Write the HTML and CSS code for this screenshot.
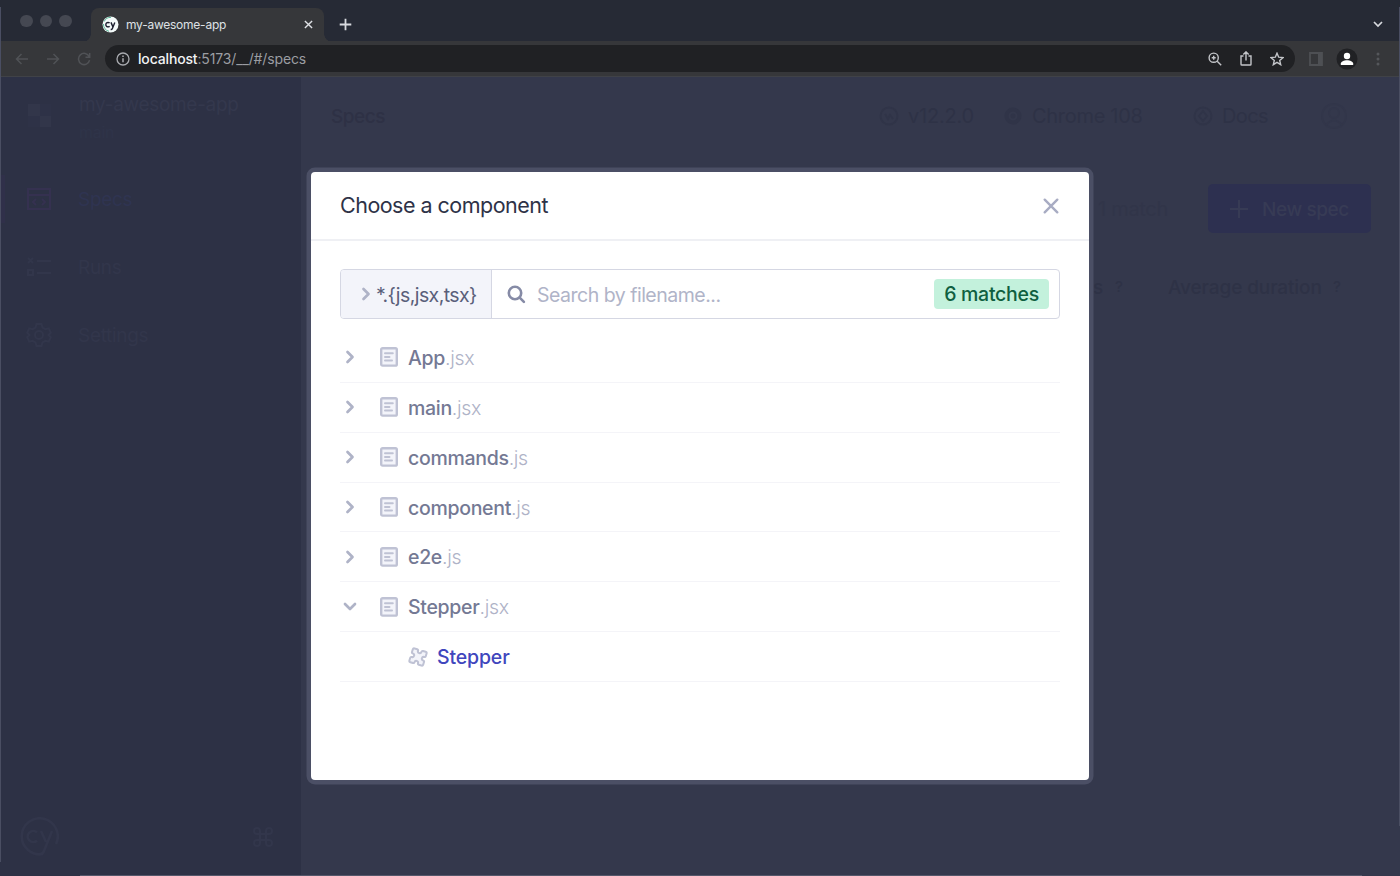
FILE: index.html
```html
<!DOCTYPE html>
<html lang="en">
<head>
<meta charset="utf-8">
<title>my-awesome-app</title>
<link rel="stylesheet" href="styles.css">
</head>
<body>
<svg class="defs" width="0" height="0">
  <symbol id="file" viewBox="0 0 18 20"><rect x="1.2" y="1.2" width="15.6" height="17.4" rx="1.4" fill="#f3f4fa" stroke="#bfc2d4" stroke-width="2.4"/><path d="M5 6.3h7.8M5 9.9h4.500M5 13.5h7" stroke="#bfc2d4" stroke-width="2" stroke-linecap="round"/></symbol>
  <symbol id="right" viewBox="0 0 10 14"><path d="M2.500 2l5 5-5 5" fill="none" stroke="#afb3c7" stroke-width="2.7" stroke-linecap="round" stroke-linejoin="round"/></symbol>
  <symbol id="down" viewBox="0 0 14 10"><path d="M2 2l5 5 5-5" fill="none" stroke="#afb3c7" stroke-width="2.7" stroke-linecap="round" stroke-linejoin="round"/></symbol>
</svg>
<div class="browser">
  <div class="tabbar">
    <div class="lights"><i></i><i></i><i></i></div>
    <div class="tab">
      <svg class="favicon" width="17" height="17" viewBox="0 0 17 17"><circle cx="8.5" cy="8.5" r="8" fill="#f4fafa"/><path d="M2.200 5.500A7 7 0 0 1 9 1.400M1.500 8a7 7 0 0 0 5.500 7.300" fill="none" stroke="#58b596" stroke-width="1"/><path d="M7.600 7.100a2.200 2.200 0 1 0 0 3.100M9 6.400l1.800 4.200M12.800 6.400l-2.400 6q-.5 1.200-1.700 1.100" fill="none" stroke="#1b1e2e" stroke-width="1.400"/></svg>
      <span class="tab-title">my-awesome-app</span>
      <svg width="9" height="9" viewBox="0 0 9 9"><path d="M.9.9l7.2 7.2M8.1.9L.9 8.1" stroke="#dfe1e5" stroke-width="1.4"/></svg>
    </div>
    <svg class="newtab" width="13" height="13" viewBox="0 0 13 13"><path d="M6.5.7v11.6M.7 6.5h11.6" stroke="#d8dadf" stroke-width="1.8"/></svg>
    <svg class="tablist" width="10" height="7" viewBox="0 0 10 7"><path d="M1 1l4 4 4-4" fill="none" stroke="#d8dadf" stroke-width="1.7"/></svg>
  </div>
  <div class="toolbar">
    <div class="nav">
      <svg width="14" height="12" viewBox="0 0 14 12"><path d="M13 6H1.5M6.5 1l-5 5 5 5" /></svg>
      <svg width="14" height="12" viewBox="0 0 14 12"><path d="M1 6h11.500M7.500 1l5 5-5 5"/></svg>
      <svg width="14" height="14" viewBox="0 0 14 14"><path d="M12.200 4.600A5.600 5.600 0 1 0 12.600 8.200M12.700 1v4.200H8.500"/></svg>
    </div>
    <div class="address">
      <svg width="14" height="14" viewBox="0 0 14 14"><circle cx="7" cy="7" r="6" fill="none" stroke="#a9abb0" stroke-width="1.3"/><path d="M7 6.200v4M7 3.600v1.500" stroke="#a9abb0" stroke-width="1.500"/></svg>
      <span class="url"><b>localhost</b>:5173/__/#/specs</span>
      <div class="actions">
        <svg width="14" height="14" viewBox="0 0 14 14"><circle cx="5.700" cy="5.700" r="4.600"/><path d="M9.200 9.200l4 4M5.700 3.700v4M3.700 5.700h4"/></svg>
        <svg width="12" height="15" viewBox="0 0 12 15"><path d="M3.500 5H1v8.200q0 .8.800.8h8.400q.8 0 .8-.8V5H8.500M6 9.500V1M3.300 3.600L6 .9l2.700 2.700"/></svg>
        <svg width="14" height="14" viewBox="0 0 14 14"><path d="M7 1.200l1.700 4 4.300.4-3.300 2.800 1 4.300L7 10.400l-3.700 2.300 1-4.300L1 5.600l4.300-.4z"/></svg>
      </div>
    </div>
    <svg class="panel" width="14" height="14" viewBox="0 0 14 14"><path d="M1 1h12v12H1z" fill="none" stroke="#4e5054" stroke-width="1.800"/><path d="M9 1h4v12H9z" fill="#4e5054"/></svg>
    <svg class="profile" width="22" height="22" viewBox="0 0 22 22"><circle cx="11" cy="11" r="10.500" fill="#202124"/><circle cx="11" cy="8" r="3.200" fill="#fff"/><path d="M4.800 17v-1.400c0-2.100 3.200-3.400 6.200-3.400s6.200 1.300 6.200 3.400V17z" fill="#fff"/></svg>
    <svg class="menu" width="4" height="14" viewBox="0 0 4 14" fill="#55575b"><circle cx="2" cy="2" r="1.500"/><circle cx="2" cy="7" r="1.500"/><circle cx="2" cy="12" r="1.500"/></svg>
  </div>
  <div class="app">
    <aside class="sidebar">
      <div class="project">
        <svg width="24" height="24" viewBox="0 0 24 24"><path d="M0 0h12v12H0zM12 12h11v11H12z" fill="#32364a"/><path d="M12 0h11v12H12zM0 12h12v11H0z" fill="#2e3247"/></svg>
        <div><div class="project-name">my-awesome-app</div><div class="branch">main</div></div>
      </div>
      <div class="side-item active"><svg width="26" height="24" viewBox="0 0 26 24"><path d="M2 2h22v20H2zM2 8h22M10 12l-3 3 3 3M16 12l3 3-3 3"/></svg><span>Specs</span></div>
      <div class="side-item"><svg width="26" height="24" viewBox="0 0 26 24"><path d="M2 3l5 5M7 3L2 8M11 6h14M2 15h5v5H2zM11 18h14"/></svg><span>Runs</span></div>
      <div class="side-item"><svg width="26" height="26" viewBox="0 0 26 26"><path d="M10.500 2h5l1 3.500 3 1.700 3.300-.8 2 4.300-2.300 2.300 2.300 2.300-2 4.300-3.300-.8-3 1.700-1 3.500h-5l-1-3.500-3-1.700-3.300.8-2-4.300L3.500 13l-2.300-2.300 2-4.300 3.300.8 3-1.700z"/><circle cx="13" cy="13" r="4"/></svg><span>Settings</span></div>
      <div class="side-foot">
        <svg width="40" height="40" viewBox="0 0 40 40"><path d="M24 37A18 18 0 1 1 37 27M18 15.500a5.500 5.500 0 1 0 0 8M22 14l5 11M33 14l-8 20q-1 3-4 3"/></svg>
        <svg width="20" height="20" viewBox="0 0 20 20"><path d="M7 7h6v6H7zM7 7H4a3 3 0 1 1 3-3zM13 7V4a3 3 0 1 1 3 3zM13 13h3a3 3 0 1 1-3 3zM7 13v3a3 3 0 1 1-3-3z"/></svg>
      </div>
    </aside>
    <main class="content">
      <header class="top">
        <span class="page-title">Specs</span>
        <div class="top-item version"><svg width="20" height="20" viewBox="0 0 20 20"><circle cx="10" cy="10" r="8.500"/><path d="M6 8l3 5 2-4 3 4"/></svg><span>v12.2.0</span></div>
        <div class="top-item chrome"><svg width="20" height="20" viewBox="0 0 20 20"><circle cx="10" cy="10" r="6.500" stroke-width="4"/><circle cx="10" cy="10" r="1.500"/></svg><span>Chrome 108</span></div>
        <div class="top-item docs"><svg width="20" height="20" viewBox="0 0 20 20"><circle cx="10" cy="10" r="8.500"/><path d="M10 5l4 5-4 5-4-5z"/></svg><span>Docs</span></div>
        <svg class="avatar" width="28" height="28" viewBox="0 0 28 28"><circle cx="14" cy="14" r="12"/><circle cx="14" cy="11" r="5"/><path d="M6 23q8-9 16 0"/></svg>
      </header>
      <div class="spec-tools"><span class="match">1 match</span><div class="new-spec"><svg width="20" height="20" viewBox="0 0 20 20"><path d="M10 1v18M1 10h18" stroke="#373b55" stroke-width="2"/></svg><span>New spec</span></div></div>
      <div class="spec-head"><span class="s">s</span><em>?</em><span class="avg">Average duration</span><em>?</em></div>
    </main>
  </div>
  <i class="edge edge-left"></i><i class="edge edge-right"></i><i class="edge edge-bottom"></i>
  <section class="modal">
    <header class="modal-head"><h1>Choose a component</h1><svg width="16" height="16" viewBox="0 0 16 16"><path d="M1.700 1.700l12.600 12.600M14.300 1.700L1.700 14.300" stroke="#a8acc3" stroke-width="2.400" stroke-linecap="round"/></svg></header>
    <div class="modal-body">
      <div class="search">
        <div class="pattern"><svg width="10" height="14"><use href="#right"/></svg><span>*.{js,jsx,tsx}</span></div>
        <svg class="glass" width="19" height="19" viewBox="0 0 19 19"><circle cx="8" cy="8" r="6.200" fill="none" stroke="#868ba6" stroke-width="2.600"/><path d="M12.700 12.700l4.200 4.200" stroke="#868ba6" stroke-width="2.600" stroke-linecap="round"/></svg>
        <span class="placeholder">Search by filename...</span>
        <span class="badge"><span>6 matches</span></span>
      </div>
      <ul class="files">
        <li><svg class="chev" width="10" height="14"><use href="#right"/></svg><svg class="doc" width="18" height="20"><use href="#file"/></svg><b>App</b><span>.jsx</span></li>
        <li><svg class="chev" width="10" height="14"><use href="#right"/></svg><svg class="doc" width="18" height="20"><use href="#file"/></svg><b>main</b><span>.jsx</span></li>
        <li><svg class="chev" width="10" height="14"><use href="#right"/></svg><svg class="doc" width="18" height="20"><use href="#file"/></svg><b>commands</b><span>.js</span></li>
        <li><svg class="chev" width="10" height="14"><use href="#right"/></svg><svg class="doc" width="18" height="20"><use href="#file"/></svg><b>component</b><span>.js</span></li>
        <li><svg class="chev" width="10" height="14"><use href="#right"/></svg><svg class="doc" width="18" height="20"><use href="#file"/></svg><b>e2e</b><span>.js</span></li>
        <li><svg class="chev open" width="14" height="10"><use href="#down"/></svg><svg class="doc" width="18" height="20"><use href="#file"/></svg><b>Stepper</b><span>.jsx</span></li>
        <li class="child"><svg width="20" height="20" viewBox="0 0 20 20"><path transform="rotate(17 10 10)" d="M4.200 2.800H7q1.200 0 1.200 1.300a1.800 1.800 0 0 0 3.600 0q0-1.300 1.200-1.300h2.800q1.400 0 1.400 1.400V7q0 1.200-1.300 1.200a1.800 1.800 0 0 0 0 3.600q1.300 0 1.300 1.200v2.800q0 1.400-1.400 1.400H13q-1.200 0-1.200-1.300a1.800 1.800 0 0 0-3.600 0q0 1.300-1.200 1.300H4.200q-1.400 0-1.400-1.400V13q0-1.200 1.300-1.200a1.800 1.800 0 0 0 0-3.600Q2.800 8.200 2.800 7V4.200q0-1.400 1.400-1.400z" fill="#f3f4fa" stroke="#bfc2d4" stroke-width="2" stroke-linejoin="round"/></svg><b>Stepper</b></li>
      </ul>
    </div>
  </section>
</div>
</body>
</html>
```
FILE: styles.css
```css
* { box-sizing: border-box; }
body { margin: 0; font-family: Inter, "Liberation Sans", sans-serif; }
svg { display: block; flex: none; }
.defs { position: absolute; }
.browser { position: relative; width: 1400px; height: 876px; display: flex; flex-direction: column; overflow: hidden; background: #34384c; }
.tabbar { height: 41px; flex: none; background: #262a35; display: flex; align-items: center; padding: 7px 17px 0 20px; }
.lights { display: flex; gap: 7px; width: 71px; margin-top: -6px; }
.lights i { width: 12.500px; height: 12.500px; border-radius: 50%; background: #454852; }
.tab { position: relative; width: 233px; height: 34px; margin-top: 1px; background: #36373a; border-radius: 8px 8px 0 0; display: flex; align-items: center; padding: 0 11px 0 11px; }
.tab::before, .tab::after { content: ""; position: absolute; bottom: 0; width: 8px; height: 8px; }
.tab::before { left: -8px; background: radial-gradient(circle at 0 0, transparent 7.500px, #36373a 8px); }
.tab::after { right: -8px; background: radial-gradient(circle at 100% 0, transparent 7.500px, #36373a 8px); }
.tab-title { flex: 1; margin-left: 7px; font-size: 12px; letter-spacing: -.24px; color: #dfe1e5; }
.newtab { margin-left: 15px; }
.tablist { margin-left: auto; }
.toolbar { height: 36px; flex: none; background: #36373a; border-bottom: 1px solid #404247; display: flex; align-items: center; padding: 0 20px 0 15px; }
.nav { display: flex; align-items: center; gap: 17px; width: 90px; }
.nav path { fill: none; stroke: #505256; stroke-width: 1.500; }
.address { width: 1190px; height: 27px; border-radius: 14px; background: #202124; display: flex; align-items: center; padding: 0 11px 0 11px; }
.url { margin-left: 8px; font-size: 14px; letter-spacing: -.14px; color: #9b9da2; white-space: nowrap; }
.url b { font-weight: 500; color: #f1f2f4; letter-spacing: -.16px; }
.actions { margin-left: auto; display: flex; align-items: center; gap: 18px; }
.actions svg { fill: none; stroke: #c3c5c9; stroke-width: 1.400; }
.panel { margin-left: 14px; }
.profile { margin-left: 13px; }
.menu { margin-left: auto; }
.app { flex: 1; display: flex; min-height: 0; }
.sidebar { width: 301px; background: #2d3145; display: flex; flex-direction: column; color: #32364b; font-size: 19px; letter-spacing: -.3px; }
.project { height: 98px; display: flex; padding: 16px 0 0 28px; gap: 27px; flex: none; }
.project svg { margin-top: 11px; }
.project-name { font-size: 19px; line-height: 23px; letter-spacing: -.3px; color: #34384d; }
.branch { font-size: 16px; line-height: 20px; margin-top: 6px; color: #2f3449; }
.side-item { height: 48px; margin-bottom: 20px; display: flex; align-items: center; gap: 26px; padding-left: 26px; }
.side-item svg, .side-foot svg { fill: none; stroke: #32364b; stroke-width: 2; }
.side-item.active { padding-left: 21px; border-left: 5px solid #30304a; color: #2f3451; }
.side-item.active svg { stroke: #353150; }
.side-foot { margin-top: auto; display: flex; align-items: center; justify-content: space-between; padding: 0 28px 19px 19px; }
.side-foot svg:first-child { stroke-width: 2.600; }
.content { flex: 1; color: #2e3246; font-size: 20px; }
.top { height: 78px; display: flex; align-items: center; padding-left: 30px; }
.page-title { width: 548px; font-weight: 500; font-size: 19px; letter-spacing: -.5px; color: #2e3145; }
.top-item { display: flex; align-items: center; gap: 9px; }
.top-item svg, .avatar { fill: none; stroke: #303448; stroke-width: 2; }
.avatar { stroke: #32364a; }
.version { width: 124px; }
.chrome { width: 190px; }
.docs { width: 127px; }
.version span { letter-spacing: -.2px; }
.chrome span { letter-spacing: -.3px; }
.docs span { letter-spacing: -.6px; }
.spec-tools { height: 78px; display: flex; justify-content: flex-end; align-items: flex-end; padding-right: 29px; }
.match { width: 110px; height: 49px; line-height: 50px; letter-spacing: -.3px; color: #313549; }
.new-spec { width: 163px; height: 49px; border-radius: 5px; background: #2d3050; color: #373b55; display: flex; align-items: center; gap: 13px; padding: 1px 0 0 21px; font-weight: 500; font-size: 19px; letter-spacing: -.4px; }
.spec-head { display: flex; align-items: center; height: 108px; padding-left: 792px; font-weight: 500; font-size: 19px; letter-spacing: -.1px; }
.s { width: 18px; }
.spec-head em { font-style: normal; width: 16px; height: 16px; font-size: 15px; line-height: 16px; text-align: center; }
.avg { width: 161px; margin-left: 41px; }
.edge { position: absolute; background: #4a4e62; }
.edge-left { left: 0; top: 7px; width: 1px; height: 855px; }
.edge-right { right: 0; top: 7px; width: 1px; height: 819px; }
.edge-bottom { left: 80px; bottom: 0; width: 1282px; height: 1px; background: #54576a; }
.modal { position: absolute; left: 311px; top: 172px; width: 778px; height: 608px; background: #fff; border-radius: 4px; box-shadow: 0 0 0 4.500px #4b4f65; }
.modal-head { height: 69px; border-bottom: 2px solid #eff0f4; display: flex; align-items: center; justify-content: space-between; padding: 0 30px 0 29px; }
h1 { margin: 0; font-weight: 400; font-size: 21.500px; line-height: 26px; padding-bottom: 1px; color: #2e3247; letter-spacing: -.52px; }
.modal-body { padding: 28px 29px 0; }
.search { width: 720px; height: 50px; border: 1px solid #d5d7e3; border-radius: 4px; display: flex; align-items: center; padding-right: 10px; }
.pattern { width: 151px; height: 48px; display: flex; align-items: center; gap: 5px; padding-left: 20px; border-right: 1px solid #d5d7e3; background: #f3f4fa; border-radius: 3px 0 0 3px; color: #5a5f7a; font-size: 19.500px; letter-spacing: -.58px; white-space: nowrap; }
.glass { margin-left: 15px; }
.placeholder { margin-left: 11px; font-size: 19.500px; letter-spacing: -.5px; color: #b0b4c8; flex: 1; }
.pattern span, .placeholder, .badge span { padding-top: 1px; }
.badge { width: 115px; height: 30px; line-height: 31px; border-radius: 4px; background: #c3f1dc; color: #0f5f40; font-weight: 500; font-size: 19.500px; letter-spacing: -.28px; text-align: center; white-space: nowrap; }
.files { list-style: none; margin: 14px 0 0; padding: 0; }
.files li { height: 49.860px; border-bottom: 1px solid #f4f4f8; display: flex; align-items: center; font-size: 19.500px; color: #afb3c7; }
.files b { font-weight: 500; color: #747994; letter-spacing: -.3px; padding-top: 1px; }
.files li > span { font-weight: 300; letter-spacing: -.3px; padding-top: 1px; }
.chev { margin-left: 5px; margin-right: 25px; }
.chev.open { margin-left: 3px; margin-right: 23px; }
.doc { margin-right: 10px; }
.files .child { padding-left: 68px; gap: 9px; }
.files .child b { color: #3f46bd; letter-spacing: -.15px; }
```
